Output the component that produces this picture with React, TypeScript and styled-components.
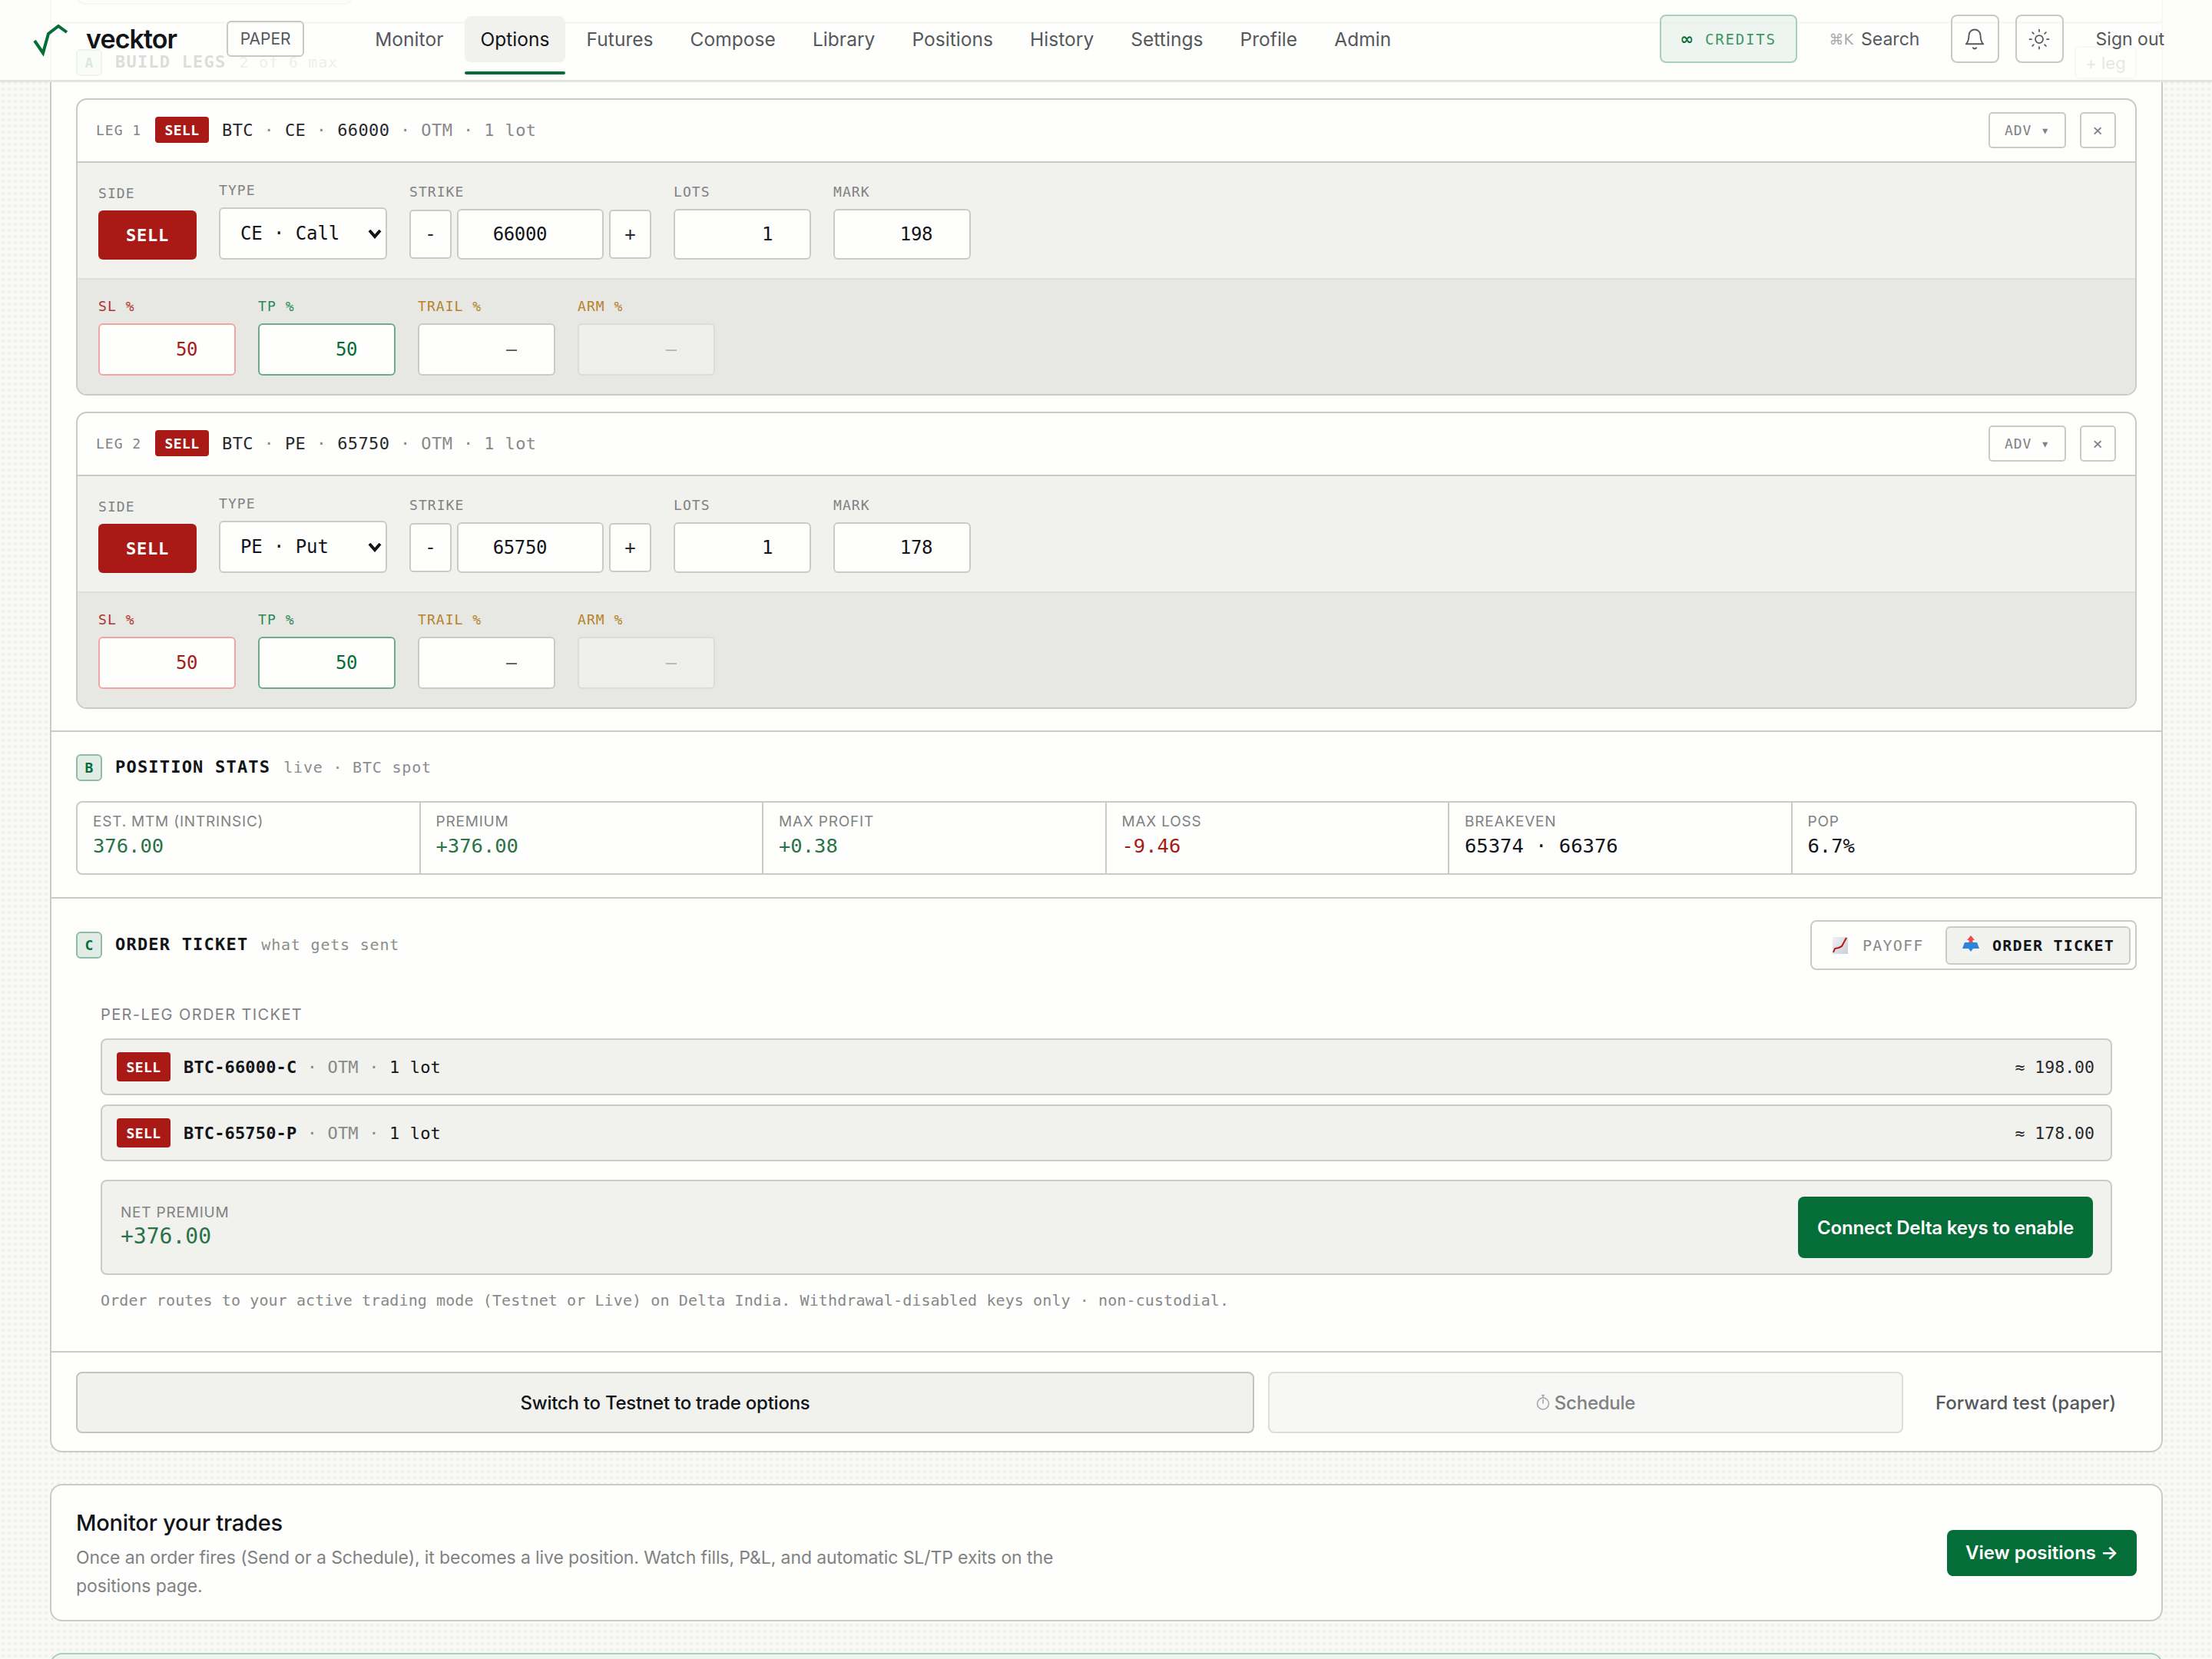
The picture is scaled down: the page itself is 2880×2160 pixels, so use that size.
import React from "react";
import styled, { createGlobalStyle } from "styled-components";

const MONO = `"DejaVu Sans Mono", "Liberation Mono", monospace`;
const SANS = `Inter, "Liberation Sans", sans-serif`;
const GREEN = "#056d37";
const RED = "#a91a16";
const INK = "#111418";
const LINE = "#cbcbc6";

const Global = createGlobalStyle`
  * { box-sizing: border-box; }
  html, body { margin: 0; padding: 0; background: #f9f9f6; }
  body { font-family: ${SANS}; color: ${INK}; }
`;

const Page = styled.div`
  position: relative;
  width: 2880px;
  height: 2160px;
  overflow: hidden;
  background-color: #f9f9f6;
  background-image: radial-gradient(circle, #eff0eb 2px, transparent 2.2px);
  background-size: 8px 8px;
`;

const TopBar = styled.header`
  position: absolute;
  inset: 0 0 auto 0;
  z-index: 5;
  height: 107px;
  display: flex;
  align-items: center;
  padding: 0 62px 3px 40px;
  background: rgba(254, 254, 252, 0.86);
  border-bottom: 3px solid #e3e3df;
`;

const LogoMark = styled.svg`
  width: 52px;
  height: 46px;
  flex: none;
`;

const Wordmark = styled.span`
  margin-left: 20px;
  font-size: 34px;
  font-weight: 600;
  letter-spacing: -0.9px;
  color: ${INK};
`;

const ModeBadge = styled.span`
  margin-left: 65px;
  width: 101px;
  height: 47px;
  display: flex;
  align-items: center;
  justify-content: center;
  border: 2px solid #c9c9c4;
  border-radius: 6px;
  font-size: 21px;
  color: #55585c;
`;

const Nav = styled.nav`
  margin-left: 72px;
  display: flex;
  gap: 8px;
`;

const NavItem = styled.a<{ $active?: boolean }>`
  position: relative;
  height: 60px;
  padding: 0 20px;
  display: flex;
  align-items: center;
  border-radius: 8px;
  font-size: 24.5px;
  letter-spacing: 0.05px;
  color: ${(p) => (p.$active ? INK : "#55585c")};
  background: ${(p) => (p.$active ? "#f1f1ee" : "transparent")};
  ${(p) =>
    p.$active
      ? `&::after { content: ""; position: absolute; left: 0; right: 0; bottom: -16px; height: 4px; border-radius: 2px; background: ${GREEN}; }`
      : ""}
`;

const RightGroup = styled.div`
  margin-left: auto;
  display: flex;
  align-items: center;
`;

const Credits = styled.div`
  width: 179px;
  height: 63px;
  display: flex;
  align-items: center;
  justify-content: center;
  gap: 15px;
  border: 2px solid #a9cfb9;
  border-radius: 8px;
  background: rgba(226, 239, 232, 0.6);
  font-family: ${MONO};
  font-size: 19px;
  letter-spacing: 1.8px;
  color: #3f9563;
`;

const Infinity = styled.span`
  font-family: "DejaVu Sans", sans-serif;
  font-weight: 700;
  font-size: 21px;
  letter-spacing: 0;
  color: ${GREEN};
`;

const SearchButton = styled.div`
  margin-left: 42px;
  width: 114px;
  display: flex;
  align-items: center;
  gap: 10px;
  font-size: 23px;
  color: #55585c;
`;

const Kbd = styled.span`
  font-family: "DejaVu Sans", sans-serif;
  font-size: 19px;
  color: #a9abac;
  white-space: nowrap;
`;

const IconButton = styled.div<{ $gap?: number }>`
  margin-left: ${(p) => p.$gap ?? 21}px;
  width: 63px;
  height: 63px;
  display: flex;
  align-items: center;
  justify-content: center;
  border: 2px solid #c9c9c4;
  border-radius: 8px;
  color: #55585c;
`;

const SignOut = styled.span`
  margin-left: 42px;
  font-size: 23px;
  color: #55585c;
  white-space: nowrap;
`;

const Content = styled.main`
  margin-top: -40px;
  padding: 0 64px 0 65px;
  display: flex;
  flex-direction: column;
  gap: 41px;
`;

const Card = styled.section`
  background: #fefefc;
  border: 2px solid ${LINE};
  border-radius: 16px;
  overflow: hidden;
`;

const Stub = styled.div`
  height: 69px;
  padding: 0 32px;
  border-bottom: 3px solid #c9c9c4;
`;

const StubBox = styled.div`
  width: 361px;
  height: 44px;
  border: 2px solid ${LINE};
  border-top: none;
  border-radius: 0 0 12px 12px;
  background: #f3f3f0;
`;

const Section = styled.div<{ $top: number; $bottom: number }>`
  padding: ${(p) => p.$top}px 32px ${(p) => p.$bottom}px;
  border-bottom: 2px solid ${LINE};
`;

const SectionHead = styled.div<{ $height: number; $mb?: number }>`
  display: flex;
  align-items: center;
  height: ${(p) => p.$height}px;
  margin-bottom: ${(p) => p.$mb ?? 0}px;
`;

const Letter = styled.span`
  width: 34px;
  height: 35px;
  display: flex;
  align-items: center;
  justify-content: center;
  flex: none;
  border: 2px solid #8dbea4;
  border-radius: 6px;
  background: #e1ece6;
  color: ${GREEN};
  font-family: ${MONO};
  font-weight: 700;
  font-size: 18px;
`;

const SectionTitle = styled.h2`
  margin: 0 0 2px 17px;
  font-family: ${MONO};
  font-size: 22px;
  font-weight: 700;
  letter-spacing: 1.2px;
  color: ${INK};
`;

const SectionHint = styled.span`
  margin: 0 0 2px 17px;
  font-family: ${MONO};
  font-size: 20px;
  letter-spacing: 0.8px;
  color: #8b8d8e;
`;

const AddLeg = styled.span`
  margin-left: auto;
  width: 81px;
  height: 43px;
  display: flex;
  align-items: center;
  justify-content: center;
  border: 2px solid ${LINE};
  border-radius: 6px;
  font-size: 22px;
  color: #55585c;
`;

const LegList = styled.div`
  display: flex;
  flex-direction: column;
  gap: 21px;
`;

const LegCard = styled.article`
  border: 2px solid ${LINE};
  border-radius: 14px;
  overflow: hidden;
  background: #fefefc;
`;

const LegHead = styled.div`
  height: 82px;
  padding: 0 25px 2px 24px;
  display: flex;
  align-items: center;
  border-bottom: 2px solid ${LINE};
`;

const LegTag = styled.span`
  width: 77px;
  font-family: ${MONO};
  font-size: 18px;
  letter-spacing: 1px;
  color: #808284;
`;

const SellPill = styled.span<{ $h: number }>`
  width: 70px;
  height: ${(p) => p.$h}px;
  display: flex;
  align-items: center;
  justify-content: center;
  flex: none;
  border-radius: 4px;
  background: ${RED};
  color: #fff;
  font-family: ${MONO};
  font-size: 18px;
  font-weight: 700;
  letter-spacing: 0.4px;
`;

const LegSummary = styled.span`
  margin-left: 17px;
  font-family: ${MONO};
  font-size: 22px;
  letter-spacing: 0.4px;
  color: #26282b;
`;

const Muted = styled.span`
  color: #87898b;
`;

const GhostButton = styled.span<{ $w: number; $ml?: string; $size?: number }>`
  width: ${(p) => p.$w}px;
  height: 47px;
  margin-left: ${(p) => p.$ml ?? "0"};
  display: flex;
  align-items: center;
  justify-content: center;
  flex: none;
  border: 2px solid ${LINE};
  border-radius: 5px;
  font-family: ${MONO};
  font-size: ${(p) => p.$size ?? 18}px;
  letter-spacing: 1px;
  color: #808284;
`;

const FieldRow = styled.div<{ $tone: string; $h: number }>`
  height: ${(p) => p.$h}px;
  padding: 0 29px 24px 27px;
  display: flex;
  align-items: flex-end;
  gap: 29px;
  background: ${(p) => p.$tone};
  border-bottom: 2px solid #dfdfda;
  &:last-child { border-bottom: none; }
`;

const Field = styled.label<{ $w: number }>`
  width: ${(p) => p.$w}px;
  flex: none;
  display: flex;
  flex-direction: column;
  gap: 12px;
`;

const FieldLabel = styled.span<{ $color?: string }>`
  font-family: ${MONO};
  font-size: 18px;
  line-height: 20px;
  letter-spacing: 1.05px;
  color: ${(p) => p.$color ?? "#808284"};
`;

const SideButton = styled.span`
  height: 64px;
  display: flex;
  align-items: center;
  justify-content: center;
  border-radius: 6px;
  background: ${RED};
  color: #fff;
  font-family: ${MONO};
  font-size: 22px;
  font-weight: 700;
  letter-spacing: 0.8px;
`;

const SelectWrap = styled.div`
  position: relative;
  color: ${INK};
`;

const TypeSelect = styled.select`
  display: block;
  width: 100%;
  height: 68px;
  padding: 0 0 0 26px;
  appearance: none;
  border: 2px solid ${LINE};
  border-radius: 6px;
  background: #fefefc;
  font-family: ${MONO};
  font-size: 24px;
  letter-spacing: -0.1px;
  color: ${INK};
  outline: none;
`;

const Chevron = styled.svg`
  position: absolute;
  right: 7px;
  top: 28px;
  width: 18px;
  height: 13px;
  pointer-events: none;
`;

const NumInput = styled.input<{ $color?: string; $pad?: number; $border?: string; $dim?: boolean }>`
  width: 100%;
  height: ${(p) => (p.$dim !== undefined ? "68px" : "66px")};
  padding: 0 ${(p) => p.$pad ?? 48}px 0 8px;
  border: 2px solid ${(p) => p.$border ?? LINE};
  border-radius: 6px;
  background: ${(p) => (p.$dim ? "#efefed" : "#fefefc")};
  font-family: ${MONO};
  font-size: 24px;
  letter-spacing: -0.4px;
  text-align: right;
  color: ${(p) => p.$color ?? INK};
  outline: none;
`;

const StrikeGroup = styled.div`
  display: flex;
  align-items: center;
  gap: 7px;
`;

const StepButton = styled.span`
  width: 55px;
  height: 64px;
  flex: none;
  display: flex;
  align-items: center;
  justify-content: center;
  border: 2px solid ${LINE};
  border-radius: 5px;
  background: #fefefc;
  font-family: ${MONO};
  font-size: 24px;
  color: #26282b;
`;

const StatGrid = styled.div`
  display: grid;
  grid-template-columns: repeat(6, 1fr);
  height: 96px;
  border: 2px solid ${LINE};
  border-radius: 8px;
`;

const StatCell = styled.div`
  padding: 13px 20px 0;
  border-right: 2px solid ${LINE};
  &:last-child { border-right: none; }
`;

const StatLabel = styled.div`
  font-size: 19px;
  line-height: 24px;
  letter-spacing: 0.8px;
  color: #808284;
  white-space: nowrap;
`;

const StatValue = styled.div<{ $color: string }>`
  margin-top: 2px;
  font-family: ${MONO};
  font-size: 25.5px;
  line-height: 34px;
  color: ${(p) => p.$color};
`;

const Toggle = styled.div`
  margin-left: auto;
  width: 425px;
  height: 65px;
  padding: 6px 6px 6px 27px;
  display: flex;
  align-items: center;
  justify-content: space-between;
  border: 2px solid ${LINE};
  border-radius: 8px;
`;

const ToggleOption = styled.span<{ $active?: boolean }>`
  display: flex;
  align-items: center;
  justify-content: center;
  gap: ${(p) => (p.$active ? 16 : 18)}px;
  height: 50px;
  width: ${(p) => (p.$active ? "241px" : "auto")};
  border: ${(p) => (p.$active ? `2px solid ${LINE}` : "none")};
  border-radius: 6px;
  background: ${(p) => (p.$active ? "#f1f1ee" : "transparent")};
  font-family: ${MONO};
  font-size: 20px;
  font-weight: ${(p) => (p.$active ? 700 : 400)};
  letter-spacing: 1.2px;
  color: ${(p) => (p.$active ? INK : "#87898b")};
`;

const Ticket = styled.div`
  padding: 46px 32px 0;
`;

const TicketLabel = styled.div`
  height: 24px;
  margin-bottom: 19px;
  font-size: 20px;
  line-height: 24px;
  letter-spacing: 1.4px;
  color: #808284;
`;

const TicketRows = styled.div`
  display: flex;
  flex-direction: column;
  gap: 12px;
`;

const TicketRow = styled.div`
  height: 74px;
  padding: 0 21px 0 19px;
  display: flex;
  align-items: center;
  justify-content: space-between;
  border: 2px solid ${LINE};
  border-radius: 8px;
  background: #f1f1ee;
`;

const TicketLeft = styled.div`
  display: flex;
  align-items: center;
  gap: 17px;
  font-family: ${MONO};
  font-size: 22px;
  letter-spacing: 0.15px;
  color: ${INK};
`;

const Instrument = styled.span`
  font-weight: 700;
`;

const Approx = styled.span`
  font-family: ${MONO};
  font-size: 21.5px;
  color: #26282b;
`;

const NetBox = styled.div`
  margin-top: 24px;
  height: 124px;
  padding: 0 23px 0 24px;
  display: flex;
  align-items: center;
  justify-content: space-between;
  border: 2px solid ${LINE};
  border-radius: 8px;
  background: #f1f1ee;
`;

const NetInfo = styled.div`
  padding-bottom: 3px;
`;

const NetValue = styled.div`
  margin-top: 2px;
  font-family: ${MONO};
  font-size: 28px;
  line-height: 34px;
  color: #2a7348;
`;

const PrimaryButton = styled.span<{ $w: number; $h: number; $size: number; $track?: number }>`
  width: ${(p) => p.$w}px;
  height: ${(p) => p.$h}px;
  display: flex;
  align-items: center;
  justify-content: center;
  flex: none;
  border-radius: 8px;
  background: ${GREEN};
  color: #fff;
  font-size: ${(p) => p.$size}px;
  font-weight: 600;
  letter-spacing: ${(p) => p.$track ?? 0}px;
  white-space: nowrap;
`;

const Note = styled.p`
  margin: 21px 0 54px;
  font-family: ${MONO};
  font-size: 20px;
  line-height: 24px;
  letter-spacing: 0.1px;
  color: #87898b;
`;

const ActionRow = styled.div`
  padding: 25px 32px 23px;
  display: flex;
  align-items: center;
  gap: 18px;
`;

const ActionButton = styled.span<{ $w: number; $dim?: boolean }>`
  width: ${(p) => p.$w}px;
  height: 80px;
  flex: none;
  display: flex;
  align-items: center;
  justify-content: center;
  gap: 6px;
  border: 2px solid ${(p) => (p.$dim ? "#dcdcd8" : "#c4c4be")};
  border-radius: 8px;
  background: ${(p) => (p.$dim ? "#f7f7f5" : "#f1f1ee")};
  font-size: 24px;
  font-weight: 500;
  letter-spacing: -0.25px;
  color: ${(p) => (p.$dim ? "#808284" : INK)};
`;

const ForwardTest = styled.span`
  margin-left: 24px;
  font-size: 24px;
  font-weight: 500;
  color: #55585c;
  white-space: nowrap;
`;

const MonitorCard = styled(Card)`
  height: 179px;
  padding: 0 32px;
  display: flex;
  align-items: center;
  justify-content: space-between;
`;

const MonitorText = styled.div`
  width: 1290px;
`;

const MonitorTitle = styled.h3`
  margin: 4px 0 7px;
  font-size: 29px;
  line-height: 40px;
  font-weight: 500;
  letter-spacing: -0.2px;
  color: ${INK};
`;

const MonitorBody = styled.p`
  margin: 0;
  font-size: 23px;
  line-height: 37px;
  letter-spacing: -0.1px;
  color: #808284;
`;

const GreenCard = styled.div`
  height: 200px;
  background: #eef5f1;
  border: 2px solid #a9cfb9;
  border-radius: 16px;
`;

const Sell = ({ h }: { h: number }) => <SellPill $h={h}>SELL</SellPill>;

const ChartEmoji = () => (
  <svg width="21" height="26" viewBox="0 0 21 26">
    <defs>
      <linearGradient id="pg" x1="0" y1="0" x2="1" y2="1">
        <stop offset="0" stopColor="#eef1f4" />
        <stop offset="1" stopColor="#c9d0d6" />
      </linearGradient>
    </defs>
    <rect width="20" height="22" y="2" fill="url(#pg)" />
    <path d="M1 22 L3 17 L8 16 L12 14 L18 3" fill="none" stroke="#b81414" strokeWidth="2" />
  </svg>
);

const OutboxEmoji = () => (
  <svg width="24" height="26" viewBox="0 0 24 26">
    <path d="M12 0 L17 6 L14.5 6 L14.5 10 L9.5 10 L9.5 6 L7 6 Z" fill="#f04b50" />
    <path d="M1 18 L5 10 L19 10 L23 18 L23 25 L1 25 Z" fill="#f3f3f1" />
    <path d="M4 9 L20 9 L23 17 L15 17 L12 21 L9 17 L1 17 Z" fill="#2a86d8" />
  </svg>
);

const Clock = () => (
  <svg width="18" height="22" viewBox="0 0 18 22" fill="none" stroke="#a4a6a7" strokeWidth="1.6">
    <circle cx="9" cy="12.5" r="7.5" />
    <path d="M9 12.5 V7 M7 1.5 H11 M9 1.5 V5" />
  </svg>
);

const legs = [
  { n: 1, type: "CE", label: "CE · Call", strike: "66000", mark: "198" },
  { n: 2, type: "PE", label: "PE · Put", strike: "65750", mark: "178" },
];

const Leg = ({ n, type, label, strike, mark }: (typeof legs)[number]) => (
  <LegCard>
    <LegHead>
      <LegTag>LEG {n}</LegTag>
      <Sell h={34} />
      <LegSummary>
        BTC <Muted>·</Muted> {type} <Muted>·</Muted> {strike} <Muted>· OTM · 1 lot</Muted>
      </LegSummary>
      <GhostButton $w={101} $ml="auto">ADV ▾</GhostButton>
      <GhostButton $w={47} $ml="18px" $size={22}>×</GhostButton>
    </LegHead>
    <FieldRow $tone="#f1f1ee" $h={152}>
      <Field $w={128}>
        <FieldLabel>SIDE</FieldLabel>
        <SideButton>SELL</SideButton>
      </Field>
      <Field $w={219}>
        <FieldLabel>TYPE</FieldLabel>
        <SelectWrap>
          <TypeSelect defaultValue={label}>
            <option>{label}</option>
          </TypeSelect>
          <Chevron viewBox="0 0 18 13">
            <path d="M2 2 L9 10 L16 2" fill="none" stroke="currentColor" strokeWidth="4" />
          </Chevron>
        </SelectWrap>
      </Field>
      <Field $w={315}>
        <FieldLabel>STRIKE</FieldLabel>
        <StrikeGroup>
          <StepButton>-</StepButton>
          <NumInput readOnly value={strike} $pad={72} />
          <StepButton>+</StepButton>
        </StrikeGroup>
      </Field>
      <Field $w={179}>
        <FieldLabel>LOTS</FieldLabel>
        <NumInput readOnly value="1" />
      </Field>
      <Field $w={179}>
        <FieldLabel>MARK</FieldLabel>
        <NumInput readOnly value={mark} />
      </Field>
    </FieldRow>
    <FieldRow $tone="#e7e7e3" $h={149}>
      <Field $w={179}>
        <FieldLabel $color="#b2322c">SL %</FieldLabel>
        <NumInput readOnly value="50" $color={RED} $border="#f3a3a3" $dim={false} />
      </Field>
      <Field $w={179}>
        <FieldLabel $color="#2a8a57">TP %</FieldLabel>
        <NumInput readOnly value="50" $color={GREEN} $border="#6fab8b" $dim={false} />
      </Field>
      <Field $w={179}>
        <FieldLabel $color="#b6832a">TRAIL %</FieldLabel>
        <NumInput readOnly value="–" $color="#55585c" $dim={false} />
      </Field>
      <Field $w={179}>
        <FieldLabel $color="#b6832a">ARM %</FieldLabel>
        <NumInput readOnly value="–" $color="#b4b5b5" $border="#dcdcd8" $dim />
      </Field>
    </FieldRow>
  </LegCard>
);

const stats = [
  { label: "EST. MTM (INTRINSIC)", value: "376.00", color: "#2a7348" },
  { label: "PREMIUM", value: "+376.00", color: "#2a7348" },
  { label: "MAX PROFIT", value: "+0.38", color: "#2a7348" },
  { label: "MAX LOSS", value: "-9.46", color: RED },
  { label: "BREAKEVEN", value: "65374 · 66376", color: INK },
  { label: "POP", value: "6.7%", color: INK },
];

const orders = [
  { name: "BTC-66000-C", approx: "≈ 198.00" },
  { name: "BTC-65750-P", approx: "≈ 178.00" },
];

const navItems = ["Monitor", "Options", "Futures", "Compose", "Library", "Positions", "History", "Settings", "Profile", "Admin"];

export default function App() {
  return (
    <Page>
      <Global />
      <TopBar>
        <LogoMark viewBox="0 0 52 46">
          <polyline points="5,25 16,41 23,16 36,6 47,14" fill="none" stroke={GREEN} strokeWidth="4" />
        </LogoMark>
        <Wordmark>vecktor</Wordmark>
        <ModeBadge>PAPER</ModeBadge>
        <Nav>
          {navItems.map((n) => (
            <NavItem key={n} $active={n === "Options"}>{n}</NavItem>
          ))}
        </Nav>
        <RightGroup>
          <Credits><Infinity>∞</Infinity>CREDITS</Credits>
          <SearchButton><Kbd>⌘K</Kbd>Search</SearchButton>
          <IconButton $gap={44}>
            <svg width="30" height="30" viewBox="0 0 24 24" fill="none" stroke="currentColor" strokeWidth="1.5" strokeLinecap="round" strokeLinejoin="round">
              <path d="M6 8a6 6 0 0 1 12 0c0 7 3 9 3 9H3s3-2 3-9" />
              <path d="M10.3 21a1.94 1.94 0 0 0 3.4 0" />
            </svg>
          </IconButton>
          <IconButton>
            <svg width="30" height="30" viewBox="0 0 24 24" fill="none" stroke="currentColor" strokeWidth="1.4" strokeLinecap="round">
              <circle cx="12" cy="12" r="4" />
              <path d="M12 2v2M12 20v2M4.9 4.9l1.4 1.4M17.7 17.7l1.4 1.4M2 12h2M20 12h2M6.3 17.7l-1.4 1.4M19.1 4.9l-1.4 1.4" />
            </svg>
          </IconButton>
          <SignOut>Sign out</SignOut>
        </RightGroup>
      </TopBar>
      <Content>
        <Card>
          <Stub><StubBox /></Stub>
          <Section $top={29} $bottom={28}>
            <SectionHead $height={43} $mb={25}>
              <Letter>A</Letter>
              <SectionTitle>BUILD LEGS</SectionTitle>
              <SectionHint>2 of 6 max</SectionHint>
              <AddLeg>+ leg</AddLeg>
            </SectionHead>
            <LegList>
              {legs.map((l) => <Leg key={l.n} {...l} />)}
            </LegList>
          </Section>
          <Section $top={29} $bottom={29}>
            <SectionHead $height={35} $mb={26}>
              <Letter>B</Letter>
              <SectionTitle>POSITION STATS</SectionTitle>
              <SectionHint>live · BTC spot</SectionHint>
            </SectionHead>
            <StatGrid>
              {stats.map((s) => (
                <StatCell key={s.label}>
                  <StatLabel>{s.label}</StatLabel>
                  <StatValue $color={s.color}>{s.value}</StatValue>
                </StatCell>
              ))}
            </StatGrid>
          </Section>
          <Section $top={28} $bottom={0}>
            <SectionHead $height={65}>
              <Letter>C</Letter>
              <SectionTitle>ORDER TICKET</SectionTitle>
              <SectionHint>what gets sent</SectionHint>
              <Toggle>
                <ToggleOption><ChartEmoji />PAYOFF</ToggleOption>
                <ToggleOption $active><OutboxEmoji />ORDER TICKET</ToggleOption>
              </Toggle>
            </SectionHead>
            <Ticket>
              <TicketLabel>PER-LEG ORDER TICKET</TicketLabel>
              <TicketRows>
                {orders.map((o) => (
                  <TicketRow key={o.name}>
                    <TicketLeft>
                      <Sell h={38} />
                      <span><Instrument>{o.name}</Instrument> <Muted>· OTM ·</Muted> 1 lot</span>
                    </TicketLeft>
                    <Approx>{o.approx}</Approx>
                  </TicketRow>
                ))}
              </TicketRows>
              <NetBox>
                <NetInfo>
                  <StatLabel>NET PREMIUM</StatLabel>
                  <NetValue>+376.00</NetValue>
                </NetInfo>
                <PrimaryButton $w={384} $h={80} $size={24} $track={-0.15}>Connect Delta keys to enable</PrimaryButton>
              </NetBox>
              <Note>Order routes to your active trading mode (Testnet or Live) on Delta India. Withdrawal-disabled keys only · non-custodial.</Note>
            </Ticket>
          </Section>
          <ActionRow>
            <ActionButton $w={1534}>Switch to Testnet to trade options</ActionButton>
            <ActionButton $w={827} $dim><Clock />Schedule</ActionButton>
            <ForwardTest>Forward test (paper)</ForwardTest>
          </ActionRow>
        </Card>
        <MonitorCard>
          <MonitorText>
            <MonitorTitle>Monitor your trades</MonitorTitle>
            <MonitorBody>Once an order fires (Send or a Schedule), it becomes a live position. Watch fills, P&amp;L, and automatic SL/TP exits on the positions page.</MonitorBody>
          </MonitorText>
          <PrimaryButton $w={247} $h={60} $size={24}>View positions →</PrimaryButton>
        </MonitorCard>
        <GreenCard />
      </Content>
    </Page>
  );
}
